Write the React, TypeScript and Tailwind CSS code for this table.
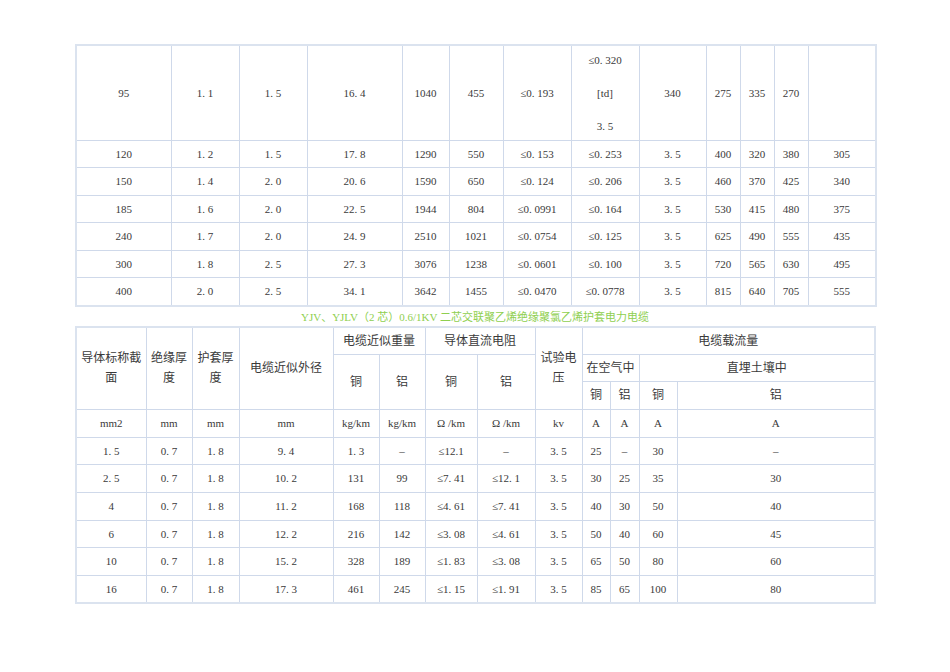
import React from "react";

const TOP_COLS = [95, 68, 68, 95, 47, 54, 68, 68, 67, 34, 34, 34, 68];
const BOTTOM_COLS = [70, 46, 47, 94, 46, 46, 52, 58, 47, 28, 29, 38, 198];

const TOP_ROWS = [
  ["120", "1. 2", "1. 5", "17. 8", "1290", "550", "≤0. 153", "≤0. 253", "3. 5", "400", "320", "380", "305"],
  ["150", "1. 4", "2. 0", "20. 6", "1590", "650", "≤0. 124", "≤0. 206", "3. 5", "460", "370", "425", "340"],
  ["185", "1. 6", "2. 0", "22. 5", "1944", "804", "≤0. 0991", "≤0. 164", "3. 5", "530", "415", "480", "375"],
  ["240", "1. 7", "2. 0", "24. 9", "2510", "1021", "≤0. 0754", "≤0. 125", "3. 5", "625", "490", "555", "435"],
  ["300", "1. 8", "2. 5", "27. 3", "3076", "1238", "≤0. 0601", "≤0. 100", "3. 5", "720", "565", "630", "495"],
  ["400", "2. 0", "2. 5", "34. 1", "3642", "1455", "≤0. 0470", "≤0. 0778", "3. 5", "815", "640", "705", "555"],
];

const BOTTOM_ROWS = [
  ["1. 5", "0. 7", "1. 8", "9. 4", "1. 3", "–", "≤12.1", "–", "3. 5", "25", "–", "30", "–"],
  ["2. 5", "0. 7", "1. 8", "10. 2", "131", "99", "≤7. 41", "≤12. 1", "3. 5", "30", "25", "35", "30"],
  ["4", "0. 7", "1. 8", "11. 2", "168", "118", "≤4. 61", "≤7. 41", "3. 5", "40", "30", "50", "40"],
  ["6", "0. 7", "1. 8", "12. 2", "216", "142", "≤3. 08", "≤4. 61", "3. 5", "50", "40", "60", "45"],
  ["10", "0. 7", "1. 8", "15. 2", "328", "189", "≤1. 83", "≤3. 08", "3. 5", "65", "50", "80", "60"],
  ["16", "0. 7", "1. 8", "17. 3", "461", "245", "≤1. 15", "≤1. 91", "3. 5", "85", "65", "100", "80"],
];

const UNITS = ["mm2", "mm", "mm", "mm", "kg/km", "kg/km", "Ω /km", "Ω /km", "kv", "A", "A", "A", "A"];

const cell = "border border-[#cfd9ea] px-1 text-center align-middle";
const head = "border border-[#cfd9ea] px-1 text-center align-middle text-[12px] leading-[20px] font-normal";

function Cols({ widths }: { widths: number[] }) {
  return (
    <colgroup>
      {widths.map((w, i) => (
        <col key={i} style={{ width: w }} />
      ))}
    </colgroup>
  );
}

export default function App() {
  return (
    <div
      className="min-h-[672px] w-[950px] bg-white pt-[44px] text-[11px] text-[#3a3a3a]"
      style={{ fontFamily: '"Liberation Serif", "Noto Sans CJK SC", serif' }}
    >
      <table className="ml-[75px] w-[800px] table-fixed border-collapse border-2 border-[#dbe3ef]">
        <Cols widths={TOP_COLS} />
        <tbody>
          <tr className="h-[95px]">
            {["95", "1. 1", "1. 5", "16. 4", "1040", "455", "≤0. 193"].map((v, i) => (
              <td key={i} className={cell}>{v}</td>
            ))}
            <td className={cell}>
              <div className="flex flex-col items-center gap-[22px] pt-[2px] leading-[11px]">
                <span>≤0. 320</span>
                <span>[td]</span>
                <span>3. 5</span>
              </div>
            </td>
            {["340", "275", "335", "270", ""].map((v, i) => (
              <td key={i} className={cell}>{v}</td>
            ))}
          </tr>
          {TOP_ROWS.map((row, r) => (
            <tr key={r} className="h-[27.6px]">
              {row.map((v, i) => (
                <td key={i} className={cell}>{v}</td>
              ))}
            </tr>
          ))}
        </tbody>
      </table>

      <div className="mt-[3px] mb-[2px] ml-[75px] w-[800px] text-center text-[11px] leading-[14px] text-[#8fcf50]">
        YJV、YJLV（2 芯）0.6/1KV 二芯交联聚乙烯绝缘聚氯乙烯护套电力电缆
      </div>

      <table className="ml-[75px] w-[799px] table-fixed border-collapse border-2 border-[#dbe3ef]">
        <Cols widths={BOTTOM_COLS} />
        <thead>
          <tr className="h-[27.5px]">
            <th rowSpan={3} className={head}>导体标称截<br />面</th>
            <th rowSpan={3} className={head}>绝缘厚<br />度</th>
            <th rowSpan={3} className={head}>护套厚<br />度</th>
            <th rowSpan={3} className={head}>电缆近似外径</th>
            <th colSpan={2} className={head}>电缆近似重量</th>
            <th colSpan={2} className={head}>导体直流电阻</th>
            <th rowSpan={3} className={head}>试验电<br />压</th>
            <th colSpan={4} className={head}>电缆载流量</th>
          </tr>
          <tr className="h-[27.5px]">
            <th rowSpan={2} className={head}>铜</th>
            <th rowSpan={2} className={head}>铝</th>
            <th rowSpan={2} className={head}>铜</th>
            <th rowSpan={2} className={head}>铝</th>
            <th colSpan={2} className={head}>在空气中</th>
            <th colSpan={2} className={head}>直埋土壤中</th>
          </tr>
          <tr className="h-[27.5px]">
            <th className={head}>铜</th>
            <th className={head}>铝</th>
            <th className={head}>铜</th>
            <th className={head}>铝</th>
          </tr>
        </thead>
        <tbody>
          <tr className="h-[28px]">
            {UNITS.map((v, i) => (
              <td key={i} className={cell}>{v}</td>
            ))}
          </tr>
          {BOTTOM_ROWS.map((row, r) => (
            <tr key={r} className="h-[27.7px]">
              {row.map((v, i) => (
                <td key={i} className={cell}>{v}</td>
              ))}
            </tr>
          ))}
        </tbody>
      </table>
    </div>
  );
}
